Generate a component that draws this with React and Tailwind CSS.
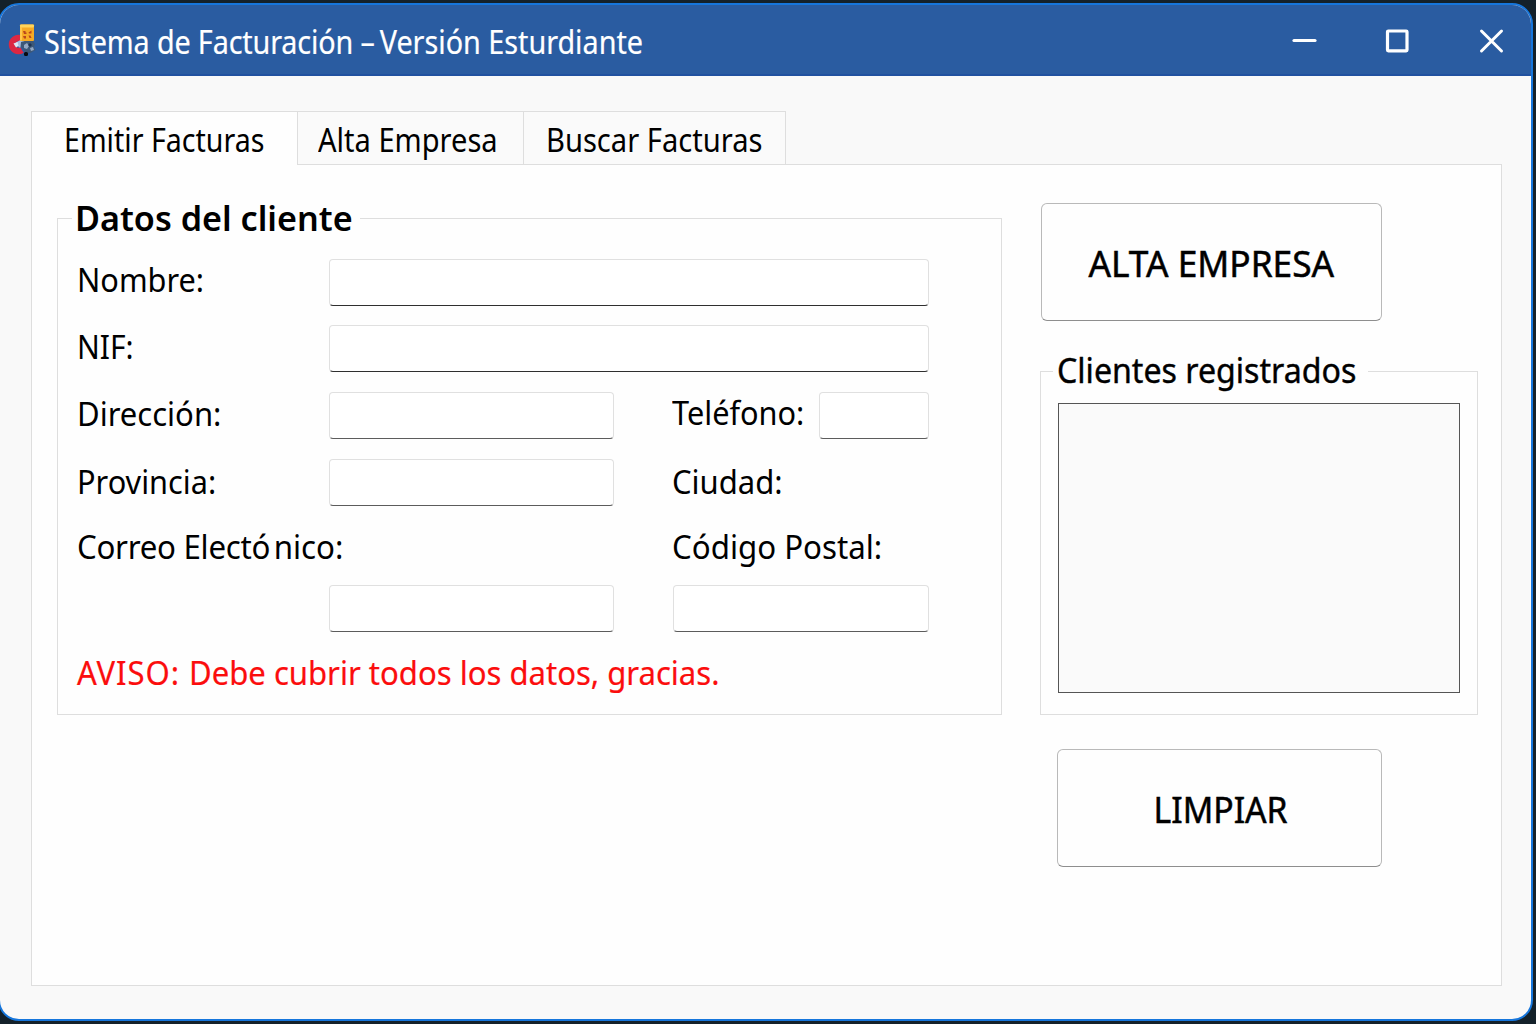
import React from 'react';

function Text({ className = '', origin = 'origin-left', children }) {
  return (
    <span className={`inline-block h-12 whitespace-nowrap leading-[48px] ${origin} ${className}`}>
      {children}
    </span>
  );
}

function Field({ className = '', strong = false }) {
  return (
    <input
      type="text"
      className={`block h-[47px] shrink-0 rounded-[4px] border border-[#e0e0e0] bg-white px-3 text-2xl outline-none ${
        strong ? 'border-b-[#2f2f2f]' : 'border-b-[#5c5c5c]'
      } ${className}`}
    />
  );
}

function AppIcon() {
  return (
    <svg className="h-[36px] w-[30px]" viewBox="0 0 30 36">
      <path d="M13 14.500A6.500 6.500 0 1 0 14 26" fill="none" stroke="#dc2742" strokeWidth="6.500" />
      <path d="M8 18.500l8-4.500 1 8.500-6 1z" fill="#a9bfe0" />
      <path d="M5.500 19.500l4-1.500 1 4-2.500 1.500z" fill="#dfe8f5" />
      <path d="M13 18l4-1h8l2 3-1 3 1.500 3-5 3h-5l-2-4-3-2z" fill="#3d5878" />
      <path d="M16 21l3-2 2 3-2 3-3-1zM22 24l3-1 1 3-3 1z" fill="#93a8c4" />
      <path d="M20 21l2-2 2 2-2 2z" fill="#1f3350" />
      <rect x="16" y="28" width="4" height="4" rx="1.500" fill="#080b12" />
      <rect x="12" y="0.500" width="14" height="16.500" rx="1" fill="#f6aa25" />
      <rect x="12" y="0.500" width="14" height="3" rx="1" fill="#ffd45a" />
      <rect x="12" y="3" width="2" height="13.500" fill="#ffc64a" />
      <path d="M15 7h2.500v1.500h1v1.500h-2.500zM20.500 8.500l3-2v3h-2.500zM15 12h3v2.500h-2zM20.500 11.500h2l1 2.500h-2z" fill="#b9471d" />
    </svg>
  );
}

function TitleBar() {
  return (
    <header className="flex h-[71px] items-start border-b-2 border-[#2152a0] bg-[#2a5ca1] pl-[8px] text-white">
      <div className="mt-[19px] flex w-[36px]">
        <AppIcon />
      </div>
      <Text className="mt-[13px] scale-x-[.898] text-[32px] [-webkit-text-stroke:0.2px_white]">
        <span className="tracking-[-0.15px]">Sistema de Facturación</span> –<span className="-ml-[3px]"> Versión Esturdiante</span>
      </Text>
      <div className="ml-auto mr-[24px] mt-[20px] flex gap-[62px]">
        <svg className="h-8 w-8" viewBox="0 0 32 32" fill="none" stroke="white" strokeWidth="3.200" strokeLinecap="round">
          <path d="M7 15.500h21" />
        </svg>
        <svg className="h-8 w-8" viewBox="0 0 32 32" fill="none" stroke="white" strokeWidth="3.200">
          <rect x="6.500" y="6" width="19.500" height="19.800" rx="0.800" />
        </svg>
        <svg className="h-8 w-8" viewBox="0 0 32 32" fill="none" stroke="white" strokeWidth="3" strokeLinecap="round">
          <path d="M6.500 6l20 20M26.500 6l-20 20" />
        </svg>
      </div>
    </header>
  );
}

function Tabs() {
  return (
    <nav className="relative z-10 -mb-px flex h-[54px] text-[32px]">
      <div className="w-[266px] border-l border-t border-[#dedede] bg-[#fefefe] pl-[32px] pt-[4px]">
        <Text className="scale-x-[.893]">Emitir Facturas</Text>
      </div>
      <div className="w-[226px] border border-r-0 border-[#dedede] bg-[#fafafa] pl-[20px] pt-[4px]">
        <Text className="scale-x-[.908]">Alta Empresa</Text>
      </div>
      <div className="w-[263px] border border-[#dedede] bg-[#fafafa] pl-[22px] pt-[4px]">
        <Text className="scale-x-[.91]">Buscar Facturas</Text>
      </div>
    </nav>
  );
}

function ClientData() {
  return (
    <section className="h-[497px] w-[945px] border border-[#dedede] text-[33px]">
      <h2 className="-mt-[27px] ml-[14px] h-12 w-[288px] bg-[#fefefe] pl-[3px] text-[34.5px] font-semibold">
        <Text className="scale-x-[.99]">Datos del cliente</Text>
      </h2>
      <div className="mt-[14px] pl-[19px]">
        <div className="flex h-[68px]">
          <div className="w-[252px] pt-px"><Text className="scale-x-[.93]">Nombre:</Text></div>
          <Field strong className="mt-[5px] w-[600px]" />
        </div>
        <div className="flex h-[66px]">
          <div className="w-[252px]"><Text className="scale-x-[.91]">NIF:</Text></div>
          <Field strong className="mt-[3px] w-[600px]" />
        </div>
        <div className="flex h-[68px]">
          <div className="w-[252px] pt-px"><Text className="scale-x-[.94]">Dirección:</Text></div>
          <Field className="mt-[4px] w-[285px]" />
          <div className="ml-[58px] w-[147px]"><Text className="scale-x-[.93]">Teléfono:</Text></div>
          <Field className="mt-[4px] w-[110px]" />
        </div>
        <div className="flex h-[66px]">
          <div className="w-[252px] pt-px"><Text className="scale-x-[.93]">Provincia:</Text></div>
          <Field className="mt-[3px] w-[285px]" />
          <div className="ml-[58px] pt-px"><Text className="scale-x-[.94]">Ciudad:</Text></div>
        </div>
        <div className="flex h-[63px]">
          <div className="w-[595px]">
            <Text className="scale-x-[.947]">
              <span className="tracking-[-0.3px]">Correo Elect</span><span className="tracking-[3.5px]">ó</span>nico:
            </Text>
          </div>
          <div><Text className="scale-x-[.947]">Código Postal:</Text></div>
        </div>
        <div className="flex h-[62px] pl-[252px]">
          <Field className="w-[285px]" />
          <Field className="ml-[59px] w-[256px]" />
        </div>
        <p className="pt-px text-[#fb0d0d] [-webkit-text-stroke:0.2px_#fb0d0d]">
          <Text className="scale-x-[.941]">
            <span className="tracking-[1px]">AVISO: </span>Debe cubrir todos los datos, gracias.
          </Text>
        </p>
      </div>
    </section>
  );
}

function ActionButton({ className = '', children }) {
  return (
    <button className={`flex h-[118px] justify-center rounded-[6px] border border-[#b9b9b9] border-b-[#8e8e8e] bg-[#fefefe] [-webkit-text-stroke:0.5px_black] ${className}`}>
      {children}
    </button>
  );
}

function Sidebar() {
  return (
    <aside className="ml-[38px] w-[438px] pt-[38px]">
      <ActionButton className="ml-px w-[341px] pt-[36px] text-[36px]">
        <Text origin="origin-center" className="scale-x-[.98]">ALTA EMPRESA</Text>
      </ActionButton>
      <section className="mt-[50px] h-[344px] border border-[#dedede]">
        <h2 className="-mt-[27px] ml-[12px] h-12 w-[315px] bg-[#fefefe] pl-[4px] text-[34px] font-normal [-webkit-text-stroke:0.4px_black]">
          <Text className="scale-x-[.945]">Clientes registrados</Text>
        </h2>
        <div className="ml-[17px] mt-[10px] h-[290px] w-[402px] border border-[#555] bg-[#fafafa]" />
      </section>
      <ActionButton className="ml-[17px] mt-[34px] w-[325px] pl-[3px] pt-[35px] text-[35.5px]">
        <Text origin="origin-center" className="scale-x-[.95]">LIMPIAR</Text>
      </ActionButton>
    </aside>
  );
}

export default function App() {
  return (
    <div className="h-[1024px] w-[1536px] overflow-hidden bg-[#14212a] pt-[3px] font-['Noto_Sans','Open_Sans',sans-serif] text-black">
      <div className="-ml-[2px] h-[1018px] w-[1535px] overflow-hidden rounded-[21px] border-2 border-[#1676dc] bg-[#f9f9f9]">
        <TitleBar />
        <main className="ml-[31px] mt-[35px] w-[1471px]">
          <Tabs />
          <div className="flex h-[822px] border border-[#dedede] bg-[#fefefe] pl-[25px]">
            <div className="pt-[53px]">
              <ClientData />
            </div>
            <Sidebar />
          </div>
        </main>
      </div>
    </div>
  );
}
